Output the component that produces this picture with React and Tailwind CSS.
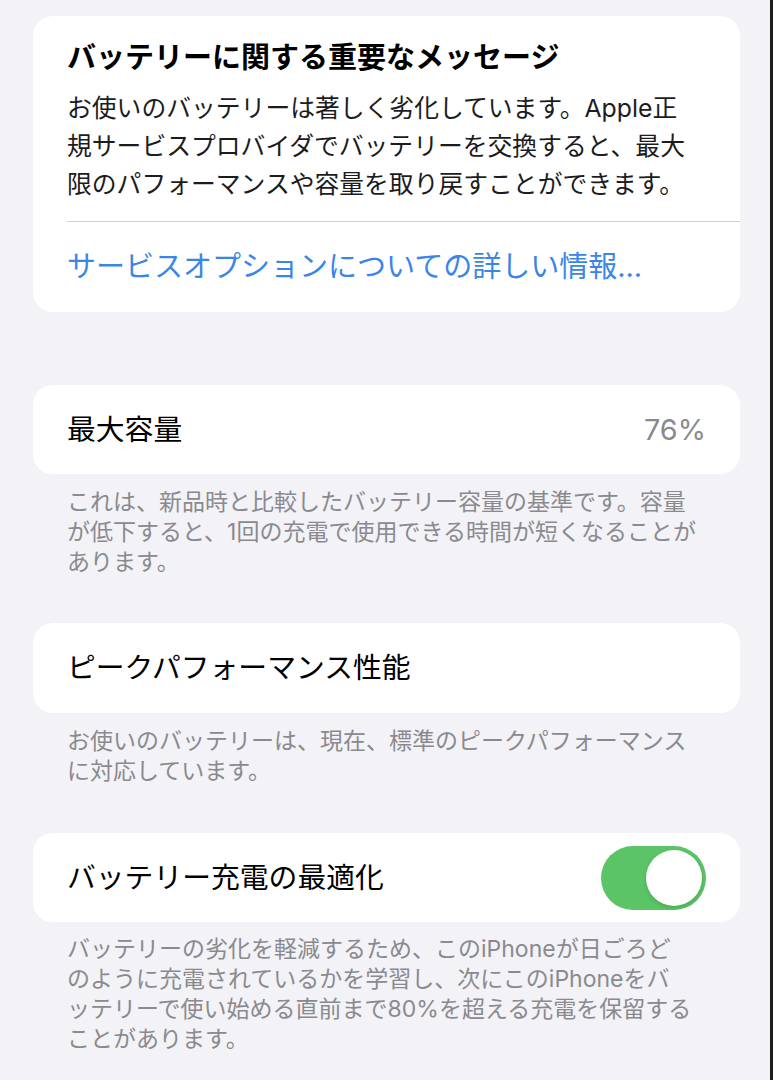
export default function App() {
  const font = "font-['Inter','Noto_Sans_CJK_JP',sans-serif]";
  const Footer = ({ lines, pt }) => (
    <div className={`px-[34px] ${pt} text-[23px] leading-[30px] text-[#8a8a8e]`}>
      {lines.map((l, i) => (
        <div key={i} className="whitespace-nowrap">{l}</div>
      ))}
    </div>
  );
  return (
    <div className={`${font} min-h-[1080px] w-full bg-[#f2f2f7] pl-[33px] pr-[30px] pt-[16px] border-r-[3px] border-[#1c1c1e] text-black`}>
      {/* Card 1 */}
      <div className="rounded-[20px] bg-white pl-[34px]">
        <div className="pt-[22px] pr-[34px]">
          <div className="text-[29px] leading-[40px] font-bold whitespace-nowrap">
            バッテリーに関する重要なメッセージ
          </div>
          <div className="mt-[11px] text-[24.8px] leading-[38px] text-[#1c1c1e]">
            <div className="whitespace-nowrap">お使いのバッテリーは著しく劣化しています。Apple正</div>
            <div className="whitespace-nowrap">規サービスプロバイダでバッテリーを交換すると、最大</div>
            <div className="whitespace-nowrap">限のパフォーマンスや容量を取り戻すことができます。</div>
          </div>
        </div>
        <div className="mt-[18px] h-px bg-[#d1d1d6]" />
        <div className="flex h-[90px] items-center text-[29px] text-[#3a85e8] whitespace-nowrap">
          サービスオプションについての詳しい情報...
        </div>
      </div>

      {/* Card 2 */}
      <div className="mt-[73px] flex h-[89px] items-center justify-between rounded-[20px] bg-white px-[34px]">
        <span className="text-[28.8px]">最大容量</span>
        <span className="text-[28.8px] text-[#8a8a8e]">76%</span>
      </div>
      <Footer
        pt="pt-[13px]"
        lines={[
          "これは、新品時と比較したバッテリー容量の基準です。容量",
          "が低下すると、1回の充電で使用できる時間が短くなることが",
          "あります。",
        ]}
      />

      {/* Card 3 */}
      <div className="mt-[46px] flex h-[90px] items-center rounded-[20px] bg-white px-[34px]">
        <span className="text-[28.8px]">ピークパフォーマンス性能</span>
      </div>
      <Footer
        pt="pt-[13px]"
        lines={[
          "お使いのバッテリーは、現在、標準のピークパフォーマンス",
          "に対応しています。",
        ]}
      />

      {/* Card 4 */}
      <div className="mt-[47px] flex h-[89px] items-center justify-between rounded-[20px] bg-white px-[34px]">
        <span className="text-[28.8px]">バッテリー充電の最適化</span>
        <div className="flex h-[64px] w-[105px] items-center justify-end rounded-full bg-[#5bc466] pr-[4px]">
          <div className="h-[56px] w-[56px] rounded-full bg-white shadow-[0_2px_4px_rgba(0,0,0,0.15)]" />
        </div>
      </div>
      <Footer
        pt="pt-[12px]"
        lines={[
          "バッテリーの劣化を軽減するため、このiPhoneが日ごろど",
          "のように充電されているかを学習し、次にこのiPhoneをバ",
          "ッテリーで使い始める直前まで80%を超える充電を保留する",
          "ことがあります。",
        ]}
      />
    </div>
  );
}
